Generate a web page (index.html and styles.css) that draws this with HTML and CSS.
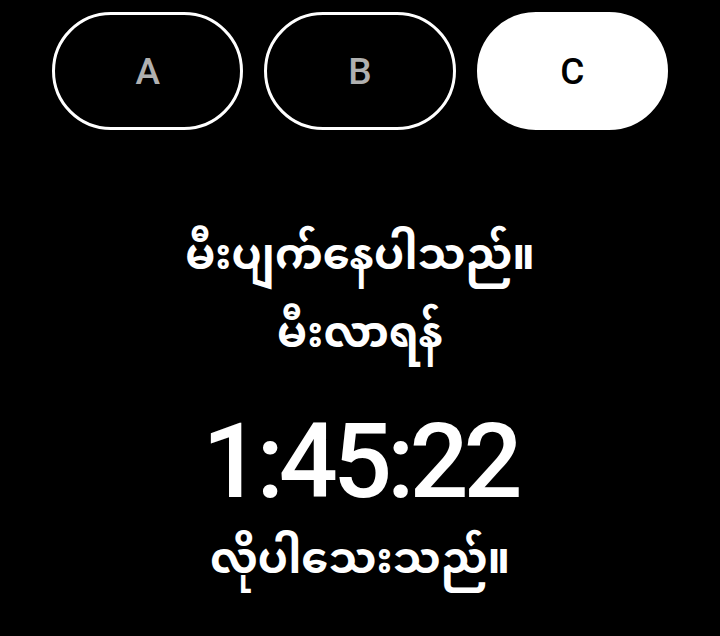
FILE: index.html
```html
<!DOCTYPE html>
<html lang="my">
<head>
<meta charset="utf-8">
<link rel="stylesheet" href="styles.css">
</head>
<body>
<div class="app">
  <div class="tabs">
    <div class="tab">A</div>
    <div class="tab">B</div>
    <div class="tab active">C</div>
  </div>
  <div class="status">
    <div class="msg">မီးပျက်နေပါသည်။</div>
    <div class="msg">မီးလာရန်</div>
    <div class="time">1:45:22</div>
    <div class="msg">လိုပါသေးသည်။</div>
  </div>
</div>
</body>
</html>
```
FILE: styles.css
```css
html, body {
  margin: 0;
  padding: 0;
  background: #000;
  width: 720px;
  height: 636px;
  overflow: hidden;
}
.app {
  font-family: Roboto, "Noto Sans Myanmar", "Noto Sans", sans-serif;
  color: #fff;
}
.tabs {
  display: flex;
  gap: 21px;
  padding: 12px 52px 0 52px;
}
.tab {
  flex: 1;
  height: 118px;
  box-sizing: border-box;
  border: 3px solid #fff;
  border-radius: 59px;
  display: flex;
  align-items: center;
  justify-content: center;
  font-size: 37px;
  font-weight: 500;
  color: #b0b0b0;
}
.tab.active {
  background: #fff;
  color: #000;
}
.status {
  display: flex;
  flex-direction: column;
  align-items: center;
  padding-top: 85px;
}
.msg {
  font-size: 43px;
  line-height: 78px;
  font-weight: 700;
}
.time {
  font-size: 104px;
  line-height: 114px;
  margin-top: 34px;
  font-weight: 500;
  letter-spacing: -5px;
}
```
